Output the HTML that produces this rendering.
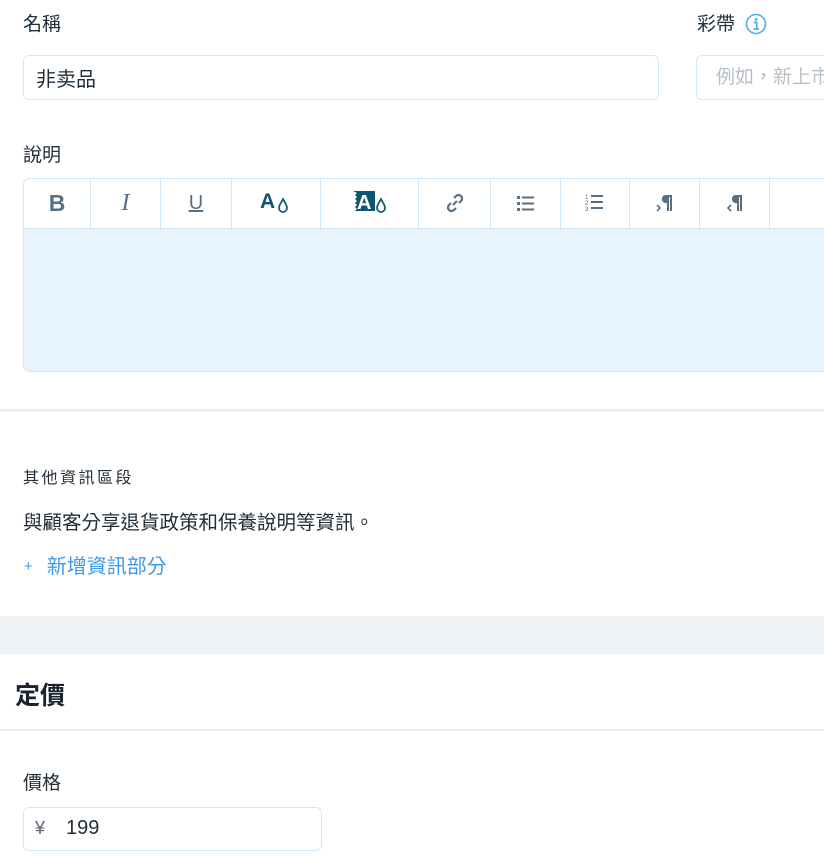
<!DOCTYPE html>
<html><head><meta charset="utf-8"><style>
*{box-sizing:border-box;margin:0;padding:0}
body{width:824px;height:865px;overflow:hidden;background:#fff;font-family:"Liberation Sans","Noto Sans CJK TC",sans-serif;color:#1f2d3a;position:relative}
.a{position:absolute;white-space:nowrap}
.lbl{font-size:19px;color:#22303e}
.inp{border:1px solid #d3e8f8;border-radius:6px;background:#fff}
.tb{position:absolute;top:178px;height:50px;display:flex;align-items:center;justify-content:center;border-right:1px solid #cfe6f8}
</style></head><body>
<div class="a lbl" style="left:23px;top:9px">名稱</div>
<div class="a inp" style="left:23px;top:55px;width:636px;height:45px"></div>
<div class="a" style="left:36px;top:63px;font-size:20px;color:#1f2d3a">非卖品</div>
<div class="a lbl" style="left:697px;top:9px">彩帶</div>
<svg class="a" style="left:745px;top:13px" width="22" height="22" viewBox="0 0 22 22"><circle cx="11" cy="11" r="9.5" fill="none" stroke="#4fb0ee" stroke-width="1.6"/><circle cx="11" cy="6.5" r="1.4" fill="#4fb0ee"/><path d="M8.5 9.5h3.3v6.5M8.5 16h5.5" stroke="#4fb0ee" stroke-width="1.7" fill="none"/></svg>
<div class="a inp" style="left:696px;top:55px;width:140px;height:45px"></div>
<div class="a" style="left:716px;top:64px;font-size:19px;color:#b7bfc8;font-family:'Noto Sans CJK TC',sans-serif;line-height:1.3">例如，新上市</div>

<div class="a lbl" style="left:23px;top:140px">說明</div>
<div class="a" style="left:23px;top:178px;width:820px;height:194px;border:1px solid #cfe6f8;border-radius:7px;background:#e8f4fd;overflow:hidden">
<div style="height:50px;background:#fff;border-bottom:1px solid #cfe6f8"></div></div>
<div class="tb" style="left:24px;width:67px;font-weight:bold;font-size:23px;color:#5b6f82">B</div>
<div class="tb" style="left:91px;width:70px;font-style:italic;font-size:24px;color:#5b6f82;font-family:'Liberation Serif',serif">I</div>
<div class="tb" style="left:161px;width:71px;font-size:20px;color:#5b6f82;text-decoration:underline">U</div>
<div class="tb" style="left:232px;width:89px"><svg width="32" height="28" viewBox="0 0 32 28"><text x="0" y="19" font-family="Liberation Sans" font-weight="bold" font-size="21" fill="#0b5670">A</text><path d="M23 10c-2 4-4 6-4 9a4 4 0 0 0 8 0c0-3-2-5-4-9z" fill="none" stroke="#0b5670" stroke-width="1.7"/></svg></div>
<div class="tb" style="left:321px;width:98px"><svg width="38" height="28" viewBox="0 0 38 28"><path d="M2 2h22v20H4l2-2-2-2 2-2-2-2 2-2-2-2 2-2-2-2 2-2z" fill="#0b5670"/><text x="6" y="20" font-family="Liberation Sans" font-weight="bold" font-size="20" fill="#fff">A</text><path d="M30 10c-2 4-4 6-4 9a4 4 0 0 0 8 0c0-3-2-5-4-9z" fill="none" stroke="#0b5670" stroke-width="1.7"/></svg></div>
<div class="tb" style="left:419px;width:72px"><svg width="22" height="22" viewBox="0 0 22 22" fill="none" stroke="#5b6f82" stroke-width="2.2"><path d="M9 13l4-4M10 6l2-2a3.5 3.5 0 0 1 5 5l-2 2M12 16l-2 2a3.5 3.5 0 0 1-5-5l2-2"/></svg></div>
<div class="tb" style="left:491px;width:70px"><svg width="20" height="18" viewBox="0 0 20 18" fill="#5b6f82"><rect x="1" y="2" width="3" height="3"/><rect x="1" y="8" width="3" height="3"/><rect x="1" y="14" width="3" height="3"/><rect x="6" y="2.5" width="12" height="2"/><rect x="6" y="8.5" width="12" height="2"/><rect x="6" y="14.5" width="12" height="2"/></svg></div>
<div class="tb" style="left:561px;width:69px"><svg width="20" height="20" viewBox="0 0 20 20" fill="#5b6f82"><text x="0" y="6" font-size="6" font-family="Liberation Sans">1</text><text x="0" y="12" font-size="6" font-family="Liberation Sans">2</text><text x="0" y="18" font-size="6" font-family="Liberation Sans">3</text><rect x="6" y="2" width="12" height="2"/><rect x="6" y="8" width="12" height="2"/><rect x="6" y="14" width="12" height="2"/></svg></div>
<div class="tb" style="left:630px;width:70px"><svg width="18" height="20" viewBox="0 0 18 20" fill="#5b6f82"><path d="M9 2h7v16h-2V4h-1v14h-2v-8a4 4 0 0 1 -2-8z"/><path d="M1 12l3 3-3 3" stroke="#5b6f82" stroke-width="1.6" fill="none"/></svg></div>
<div class="tb" style="left:700px;width:70px"><svg width="18" height="20" viewBox="0 0 18 20" fill="#5b6f82"><path d="M9 2h7v16h-2V4h-1v14h-2v-8a4 4 0 0 1 -2-8z"/><path d="M5 12l-3 3 3 3" stroke="#5b6f82" stroke-width="1.6" fill="none"/></svg></div>

<div class="a" style="left:0;top:409px;width:824px;height:3px;background:#eceff2"></div>
<div class="a" style="left:23px;top:464px;font-size:16px;letter-spacing:2.5px;color:#22303e">其他資訊區段</div>
<div class="a" style="left:23px;top:506px;font-size:19.5px;color:#1f2d3a">與顧客分享退貨政策和保養說明等資訊。</div>
<div class="a" style="left:24px;top:550px;font-size:20px;color:#3f9ae6"><span style="font-size:15px;margin-right:14px;position:relative;top:-2px">+</span>新增資訊部分</div>
<div class="a" style="left:0;top:616px;width:824px;height:38px;background:#eff3f6"></div>
<div class="a" style="left:15px;top:676px;font-size:25px;font-weight:bold;color:#1a2430">定價</div>
<div class="a" style="left:0;top:729px;width:824px;height:2px;background:#eceff2"></div>
<div class="a lbl" style="left:23px;top:768px">價格</div>
<div class="a inp" style="left:23px;top:807px;width:299px;height:44px"></div>
<div class="a" style="left:35px;top:818px;font-size:18px;color:#5b6672">¥</div>
<div class="a" style="left:66px;top:817px;font-size:20px;color:#1f2d3a">199</div>
</body></html>
